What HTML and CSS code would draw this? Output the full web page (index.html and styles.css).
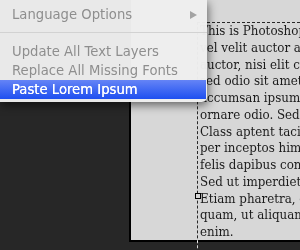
FILE: index.html
```html
<!DOCTYPE html>
<html lang="en">
<head>
    <meta charset="UTF-8">
    <meta name="viewport" content="width=device-width, initial-scale=1.0">
    <title>Paste Lorem Ipsum</title>
    <link rel="stylesheet" href="styles.css">
</head>
<body>
    <div class="workspace">
        <div class="document">
            <div class="text-frame">
                <span class="handle"></span>
                <div class="line">This is Photoshop's version of Lorem Ipsum. Proin gravida nibh</div>
                <div class="line">vel velit auctor aliquet. Aenean sollicitudin, lorem quis bibendum</div>
                <div class="line">auctor, nisi elit consequat ipsum, nec sagittis sem nibh id elit.</div>
                <div class="line">sed odio sit amet nibh vulputate cursus a sit amet mauris. Morbi</div>
                <div class="line">accumsan ipsum velit. Nam nec tellus a odio tincidunt auctor a</div>
                <div class="line">ornare odio. Sed non mauris vitae erat consequat auctor eu in elit.</div>
                <div class="line">Class aptent taciti sociosqu ad litora torquent per conubia nostra,</div>
                <div class="line">per inceptos himenaeos. Mauris in erat justo. Nullam ac urna eu</div>
                <div class="line">felis dapibus condimentum sit amet a augue. Sed non neque elit.</div>
                <div class="line">Sed ut imperdiet nisi. Proin condimentum fermentum nunc.</div>
                <div class="line">Etiam pharetra, erat sed fermentum feugiat, velit mauris egestas</div>
                <div class="line">quam, ut aliquam massa nisl quis neque. Suspendisse in orci</div>
                <div class="line">enim.</div>
            </div>
        </div>

        <!-- context menu -->
        <div class="menu">
            <div class="menu-item disabled has-sub">
                <span>Language Options</span>
                <span class="arrow"></span>
            </div>
            <div class="separator"></div>
            <div class="menu-item disabled">Update All Text Layers</div>
            <div class="menu-item disabled">Replace All Missing Fonts</div>
            <div class="menu-item selected">Paste Lorem Ipsum</div>
        </div>
    </div>
</body>
</html>
```

FILE: styles.css
```css
body {
    margin: 0;
    background-color: #272727;
    overflow: hidden;
}
.workspace {
    position: relative;
    width: 300px;
    height: 250px;
    overflow: hidden;
}
.document {
    margin-left: 129px;
    height: 240px;
    background: #d7d7d7;
    border-left: 2px solid #000;
    border-bottom: 2px solid #000;
}
.text-frame {
    position: relative;
    margin-left: 66px;
    padding-top: 23px;
    padding-left: 3px;
    height: 260px;
    font-family: "DejaVu Serif Condensed", "DejaVu Serif", serif;
    font-stretch: condensed;
    font-size: 13.2px;
    line-height: 16.75px;
    color: #1b1b1b;
}
.text-frame::before {
    content: "";
    position: absolute;
    left: 0;
    top: 22px;
    right: 0;
    bottom: 0;
    border-top: 1px dashed #fff;
    border-left: 1px dashed #fff;
    mix-blend-mode: difference;
}
.line {
    white-space: nowrap;
}
.handle {
    position: absolute;
    left: -2px;
    top: 193px;
    width: 4px;
    height: 4px;
    border: 1px solid #000;
    background: #d7d7d7;
}
.menu {
    position: absolute;
    top: 0;
    left: 0;
    width: 207px;
    padding: 5px 0 3px;
    background: rgba(238, 238, 238, 0.98);
    border-bottom-right-radius: 5px;
    box-shadow: 1px 3px 10px rgba(0, 0, 0, 0.55);
    font-family: "DejaVu Sans", sans-serif;
    font-size: 13.2px;
}
.menu-item {
    height: 19px;
    line-height: 19px;
    padding-left: 12px;
    white-space: nowrap;
}
.menu-item.disabled {
    color: #8e8e8e;
}
.has-sub {
    display: flex;
    justify-content: space-between;
    align-items: center;
    padding-right: 10px;
}
.arrow {
    width: 0;
    height: 0;
    border-top: 4.5px solid transparent;
    border-bottom: 4.5px solid transparent;
    border-left: 7px solid #a3a3a3;
}
.separator {
    height: 1px;
    background: #d2d2d2;
    margin: 8px 0 9px;
}
.menu-item.selected {
    margin-right: 1px;
    color: #fff;
    background: linear-gradient(#6584f6, #1e4ff0);
    text-shadow: 0 0 0.4px #fff;
}
```
